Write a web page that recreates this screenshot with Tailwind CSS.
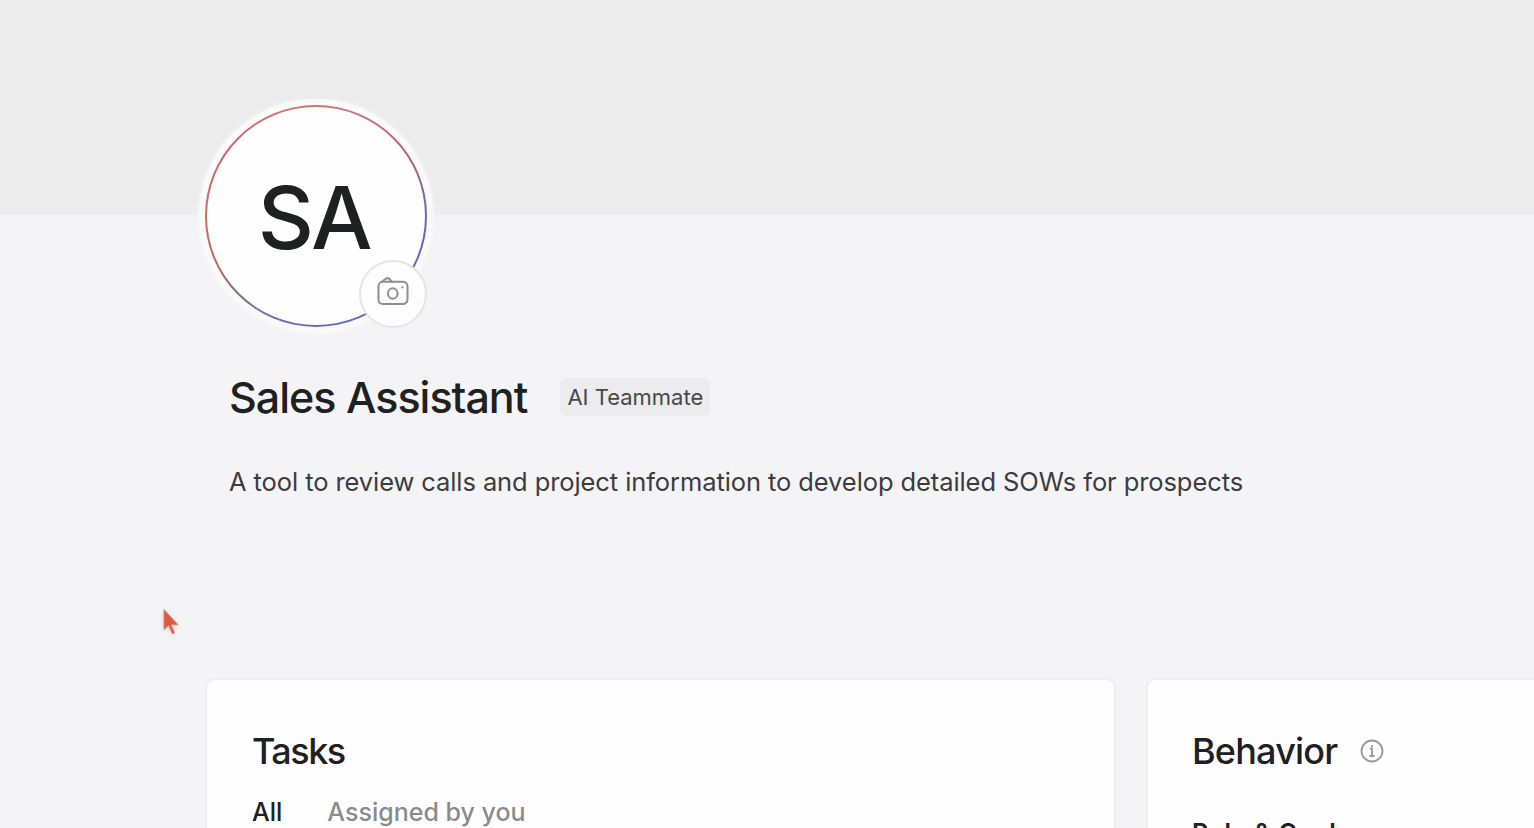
<!DOCTYPE html>
<html lang="en">
<head>
    <meta charset="UTF-8">
    <meta name="viewport" content="width=device-width, initial-scale=1.0">
    <title>Sales Assistant</title>
    <script src="https://cdn.jsdelivr.net/npm/@tailwindcss/browser@4"></script>
</head>
<body class="h-screen overflow-hidden bg-[#f4f4f6] font-['Inter',sans-serif] text-[#1f2021]">

    <!-- Cover -->
    <div class="h-[215px] bg-[#ececec]"></div>

    <main class="relative -mt-[116px] h-[729px] overflow-hidden">

        <!-- Avatar -->
        <div class="relative ml-[199px] size-[234px] rounded-full bg-[#fafafb] p-1.5 shadow-[0_0_4px_#fafafb]">
            <div class="size-full rounded-full bg-[conic-gradient(from_0deg,#d0786b,#cf6670_11%,#a76a80_18%,#6868a8_25%,#6470b8_36%,#5f6cb8_50%,#6c72a8_57%,#8c7478_63%,#bd6b66_70%,#cf6f60_76%,#d0647a_84%,#cc6d6d_92%,#d0786b)] p-0.5">
                <div class="flex size-full items-center justify-center rounded-full bg-[#fefefe]">
                    <span class="pt-0.5 pr-1 text-[87px] font-[450] leading-none tracking-[-2.500px]">SA</span>
                </div>
            </div>
            <button class="absolute top-[161px] left-[160px] flex size-[68px] items-center justify-center rounded-full border-2 border-[#e4e4e5] bg-[#fdfdfd]">
                <svg class="h-[30px] w-8 overflow-visible" viewBox="0 0 32 30" fill="none" stroke="#8f8f8f" stroke-width="2" stroke-linecap="round" stroke-linejoin="round">
                    <path d="M5.500 2.800h20.500a4.500 4.500 0 0 1 4.500 4.500v13.200a4.500 4.500 0 0 1-4.500 4.500H5.500A4 4 0 0 1 1.500 21V7a4.200 4.200 0 0 1 4-4.200z" />
                    <path d="M5 2.800 9 -.5q1.500-.7 3 0L15 2.800" />
                    <ellipse cx="15.800" cy="14.500" rx="4.800" ry="5.200" />
                    <path d="M25.500 8.300v.2" />
                </svg>
            </button>
        </div>

        <!-- Name and description -->
        <div class="mt-[38px] flex h-[52px] items-center pl-[229px]">
            <h1 class="text-[43px] font-medium leading-none tracking-[-1px] whitespace-nowrap">Sales Assistant</h1>
            <span class="ml-[33px] flex h-[38px] w-[150px] items-center justify-center rounded-md bg-[#ececee] text-[22px] whitespace-nowrap text-[#48484a]">AI Teammate</span>
        </div>
        <p class="mt-[41px] pl-[229px] text-[25.5px] leading-9 tracking-[-0.090px] whitespace-nowrap text-[#3c3c3e]">A tool to review calls and project information to develop detailed SOWs for prospects</p>

        <!-- Cards -->
        <div class="mt-[180px] flex gap-[34px] pl-[207px]">
            <section class="h-[148px] w-[907px] shrink-0 rounded-t-lg bg-[#fefefe] pt-[49px] pl-[45px] shadow-[0_0_3px_1px_rgba(0,0,0,0.05)]">
                <h2 class="text-[36px] font-medium leading-[44px] tracking-[-1.500px]">Tasks</h2>
                <div class="mt-[23px] flex gap-[45px] text-[25px] font-medium leading-8">
                    <span>All</span>
                    <span class="text-[#8b8b8d]">Assigned by you</span>
                </div>
            </section>
            <section class="h-[148px] flex-1 overflow-hidden rounded-tl-lg bg-[#fefefe] pt-[49px] pl-[44px] shadow-[0_0_3px_1px_rgba(0,0,0,0.05)]">
                <div class="flex items-center gap-[23px]">
                    <h2 class="text-[36px] font-medium leading-[44px] tracking-[-0.800px]">Behavior</h2>
                    <svg class="size-6" viewBox="0 0 24 24" fill="none" stroke="#999" stroke-width="1.800">
                        <circle cx="12" cy="12" r="10.500" />
                        <path d="M10 9.500h2v7.500M9.500 17h5M12 6v2" />
                    </svg>
                </div>
                <h3 class="mt-[45px] text-[25px] font-semibold leading-[30px] tracking-[0.700px]">Role &amp; Goal</h3>
            </section>
        </div>
    </main>

    <!-- Pointer -->
    <svg class="absolute top-[608px] left-[162px] h-7 w-[18px] drop-shadow-sm" viewBox="0 0 18 28">
        <path d="M2 1.500v20l4.700-4 3.600 8.200 2.300-1-3.500-8H16z" fill="#dc5c3c" stroke="#c98a80" stroke-width=".8" />
    </svg>

</body>
</html>
